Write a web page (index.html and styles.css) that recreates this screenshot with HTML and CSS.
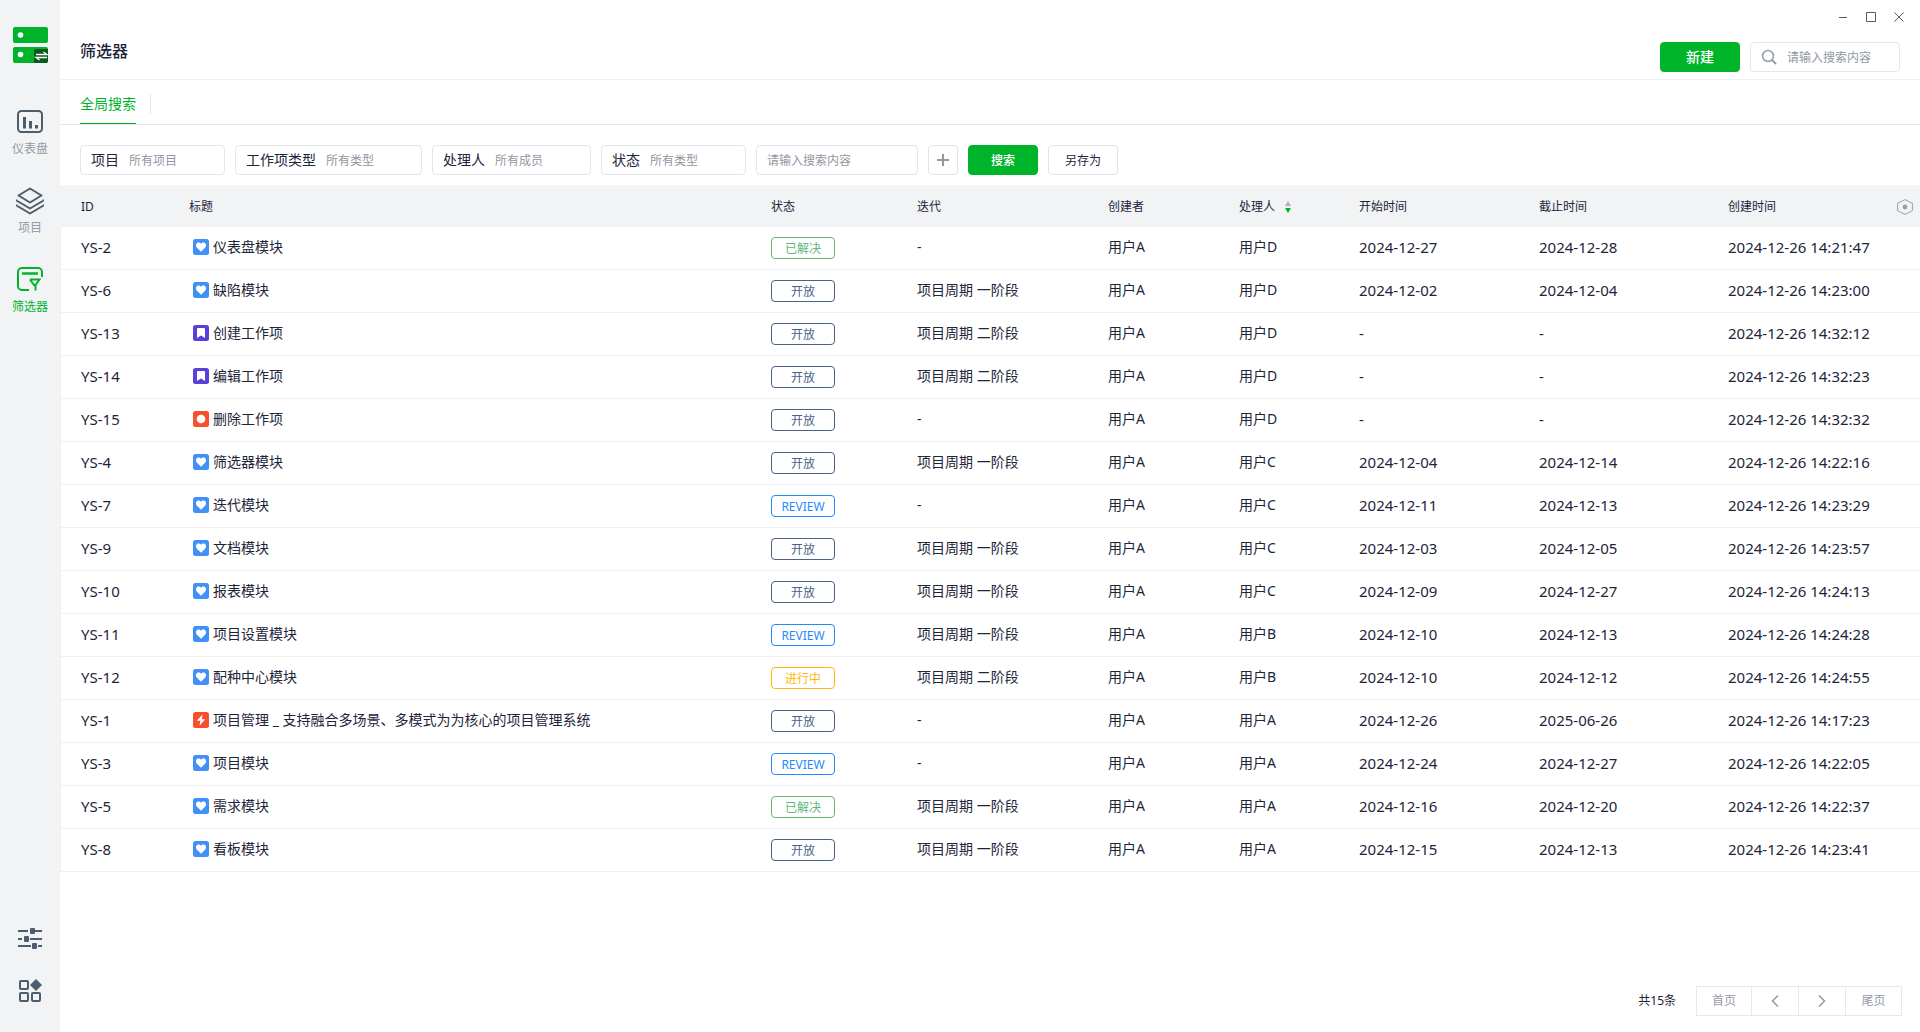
FILE: index.html
```html
<!DOCTYPE html>
<html lang="zh-CN">
<head>
<meta charset="utf-8">
<title>筛选器</title>
<link rel="stylesheet" href="styles.css">
</head>
<body>
<svg class="defs" aria-hidden="true">
  <symbol id="heart" viewBox="0 0 16 16"><rect width="16" height="16" rx="2.5" fill="#4190f7"/><path d="M8 12.8 3.700 8.500C2.500 7.100 2.700 5.100 4 4.100 5.400 3.200 7.100 3.600 8 4.800c.9-1.200 2.600-1.600 4-.7 1.300 1 1.500 3 .3 4.400z" fill="#fff"/></symbol>
  <symbol id="mark" viewBox="0 0 16 16"><rect width="16" height="16" rx="2.5" fill="#5a3fd8"/><path d="M5 3h6a1 1 0 0 1 1 1v9l-4-2.500L4 13V4a1 1 0 0 1 1-1z" fill="#fff"/></symbol>
  <symbol id="dot" viewBox="0 0 16 16"><rect width="16" height="16" rx="2.5" fill="#f9502c"/><circle cx="8" cy="8" r="4.300" fill="#fff"/></symbol>
  <symbol id="bolt" viewBox="0 0 16 16"><rect width="16" height="16" rx="2.5" fill="#f9502c"/><path d="M9.500 2.500 3.800 8.800h3.500L6.600 13.500l5.700-6.300H8.800z" fill="#fff"/></symbol>
</svg>
<div class="app">
  <nav class="sidebar" aria-label="主导航">
    <svg class="logo" viewBox="0 0 36 36"><rect x="1" width="35" height="16" rx="2" fill="#00b42a"/><rect x="1" y="20" width="35" height="16" rx="2" fill="#00b42a"/><circle cx="8.500" cy="8" r="2.800" fill="#fff"/><circle cx="8.500" cy="27.500" r="2.800" fill="#fff"/><path d="M24 22h12v12a2 2 0 0 1-2 2H22V24a2 2 0 0 1 2-2z" fill="#0b5a1c"/><path d="M24 27.500h11L31.500 25M35 30.500H24l3.500 2.500" fill="none" stroke="#fff" stroke-width="1.300"/></svg>
    <a class="nav-item" href="#dashboard">
      <svg viewBox="0 0 28 28" fill="none" stroke="currentColor" stroke-width="2"><rect x="2" y="3" width="24" height="21" rx="3.500"/><path d="M8.500 9v11.500M14.500 13v7.500M20.500 17v3.500" stroke-width="3"/></svg>
      <span>仪表盘</span></a>
    <a class="nav-item" href="#project">
      <svg viewBox="0 0 28 28" fill="none" stroke="currentColor" stroke-width="2" stroke-linejoin="round"><path d="M14 1.500 25.500 8.500 14 15.500 2.500 8.500zM.5 12.500v1L14 21.500l13.500-8v-1M.5 17.500v1L14 26.500l13.500-8v-1"/></svg>
      <span>项目</span></a>
    <a class="nav-item active" href="#filter">
      <svg viewBox="0 0 28 28" fill="none" stroke="currentColor" stroke-width="2"><path d="M26 11V6a4 4 0 0 0-4-4H6a4 4 0 0 0-4 4v14a4 4 0 0 0 4 4h7"/><path d="M6 7.500h16" stroke-width="2.500"/><path d="M14 13.500h9.500l-4 5.500v5.500M14 13.500l4 5.500h2"/></svg>
      <span>筛选器</span></a>
    <div class="nav-bottom">
      <button class="icon-btn" aria-label="设置"><svg viewBox="0 0 24 24"><path d="M0 4h10M17 4h7M0 12h4M12 12h12M0 19h13M20 19h4" stroke="#4e5d6c" stroke-width="2"/><g fill="#4e5d6c"><rect x="12" y="1" width="5" height="6" rx="1"/><rect x="6" y="9" width="5" height="6" rx="1"/><rect x="14" y="16" width="5" height="6" rx="1"/></g></svg></button>
      <button class="icon-btn" aria-label="应用"><svg viewBox="0 0 24 24"><g fill="none" stroke="#4e5d6c" stroke-width="2"><rect x="2" y="2" width="8" height="8" rx="1"/><rect x="2" y="14" width="8" height="8" rx="1"/><rect x="14" y="14" width="8" height="8" rx="1"/></g><path d="m18 0 6 6-6 6-6-6z" fill="#4e5d6c"/></svg></button>
    </div>
  </nav>
  <main class="main">
    <header class="header">
      <h1>筛选器</h1>
      <div class="header-right">
        <div class="window-controls">
          <button aria-label="最小化"><svg viewBox="0 0 12 12"><path d="M2 6.500h8"/></svg></button>
          <button aria-label="最大化"><svg viewBox="0 0 12 12"><path d="M1.500 1.500h9v9h-9z"/></svg></button>
          <button aria-label="关闭"><svg viewBox="0 0 12 12"><path d="m1.500 1.500 9 9m0-9-9 9"/></svg></button>
        </div>
        <div class="header-actions">
          <button class="btn primary create">新建</button>
          <label class="field search"><svg viewBox="0 0 16 16" fill="none" stroke="#949ca5" stroke-width="1.500"><circle cx="7" cy="7" r="5.500"/><path d="m11 11 4 4" stroke-width="2"/></svg><input type="text" placeholder="请输入搜索内容" aria-label="搜索"></label>
        </div>
      </div>
    </header>
    <div class="tabs"><a class="tab" href="#all">全局搜索</a></div>
    <form class="filters">
      <label class="field"><span>项目</span><select><option>所有项目</option></select></label>
      <label class="field wide"><span>工作项类型</span><select><option>所有类型</option></select></label>
      <label class="field mid"><span>处理人</span><select><option>所有成员</option></select></label>
      <label class="field"><span>状态</span><select><option>所有类型</option></select></label>
      <label class="field keyword"><input type="text" placeholder="请输入搜索内容" aria-label="关键字"></label>
      <button type="button" class="btn add" aria-label="添加条件"><svg viewBox="0 0 12 12"><path d="M6 0v12M0 6h12" stroke="#8f979f" stroke-width="2"/></svg></button>
      <button type="button" class="btn primary">搜索</button>
      <button type="button" class="btn">另存为</button>
    </form>
    <table class="grid">
      <colgroup><col class="c-id"><col><col class="c-status"><col class="c-iter"><col class="c-creator"><col class="c-handler"><col class="c-start"><col class="c-end"><col class="c-created"></colgroup>
      <thead><tr><th>ID</th><th>标题</th><th>状态</th><th>迭代</th><th>创建者</th><th><div class="sort">处理人<svg viewBox="0 0 6 12"><path d="M3 0 6 5H0z" fill="#b5aeb4"/><path d="M3 12 6 7H0z" fill="#00b42a"/></svg></div></th><th>开始时间</th><th>截止时间</th><th><div class="last">创建时间<button class="icon-btn" aria-label="列设置"><svg viewBox="0 0 16 16"><path d="M8 .6 15.400 4.300v7.400L8 15.400.6 11.700V4.300z" fill="none" stroke="#999fa6"/><circle cx="8" cy="8" r="2.400" fill="#999fa6"/></svg></button></div></th></tr></thead>
      <tbody id="rows"></tbody>
    </table>
    <footer class="pager">
      <span>共15条</span>
      <div class="pages"><button>首页</button><button aria-label="上一页"><svg viewBox="0 0 8 12"><path d="M7 .5 1.500 6 7 11.500"/></svg></button><button aria-label="下一页"><svg viewBox="0 0 8 12"><path d="M1 .5 6.500 6 1 11.500"/></svg></button><button>尾页</button></div>
    </footer>
  </main>
</div>
<script src="rows.js"></script>
</body>
</html>
```
FILE: rows.js
```js
const P1 = '项目周期 一阶段', P2 = '项目周期 二阶段';
const items = [
  [2, 'heart', '仪表盘模块', 'done', '-', 'D', '2024-12-27', '2024-12-28', '14:21:47'],
  [6, 'heart', '缺陷模块', 'open', P1, 'D', '2024-12-02', '2024-12-04', '14:23:00'],
  [13, 'mark', '创建工作项', 'open', P2, 'D', '-', '-', '14:32:12'],
  [14, 'mark', '编辑工作项', 'open', P2, 'D', '-', '-', '14:32:23'],
  [15, 'dot', '删除工作项', 'open', '-', 'D', '-', '-', '14:32:32'],
  [4, 'heart', '筛选器模块', 'open', P1, 'C', '2024-12-04', '2024-12-14', '14:22:16'],
  [7, 'heart', '迭代模块', 'review', '-', 'C', '2024-12-11', '2024-12-13', '14:23:29'],
  [9, 'heart', '文档模块', 'open', P1, 'C', '2024-12-03', '2024-12-05', '14:23:57'],
  [10, 'heart', '报表模块', 'open', P1, 'C', '2024-12-09', '2024-12-27', '14:24:13'],
  [11, 'heart', '项目设置模块', 'review', P1, 'B', '2024-12-10', '2024-12-13', '14:24:28'],
  [12, 'heart', '配种中心模块', 'doing', P2, 'B', '2024-12-10', '2024-12-12', '14:24:55'],
  [1, 'bolt', '项目管理 _ 支持融合多场景、多模式为为核心的项目管理系统', 'open', '-', 'A', '2024-12-26', '2025-06-26', '14:17:23'],
  [3, 'heart', '项目模块', 'review', '-', 'A', '2024-12-24', '2024-12-27', '14:22:05'],
  [5, 'heart', '需求模块', 'done', P1, 'A', '2024-12-16', '2024-12-20', '14:22:37'],
  [8, 'heart', '看板模块', 'open', P1, 'A', '2024-12-15', '2024-12-13', '14:23:41']
];
const labels = { done: '已解决', open: '开放', review: 'REVIEW', doing: '进行中' };
document.getElementById('rows').innerHTML = items.map(([id, icon, title, status, iter, user, start, end, time]) => `
  <tr><td class="num">YS-${id}</td>
  <td><div class="title"><svg><use href="#${icon}"/></svg><span>${title}</span></div></td>
  <td class="status-cell"><span class="status ${status}">${labels[status]}</span></td>
  <td>${iter}</td><td>用户A</td><td>用户${user}</td>
  <td class="num">${start}</td><td class="num">${end}</td><td class="num">2024-12-26 ${time}</td></tr>`).join('');
```
FILE: styles.css
```css
* { box-sizing: border-box; }
body {
  margin: 0;
  color: #1d2539;
  font: 14px/20px "Noto Sans", "Noto Sans CJK SC", sans-serif;
  background: #fff;
}
button, input, select { font: inherit; color: inherit; }
button { padding: 0; border: 0; background: none; cursor: pointer; }
a { color: inherit; text-decoration: none; }
svg { display: block; flex: none; }
.defs { position: absolute; width: 0; height: 0; }
.app { display: flex; min-height: 100vh; }

.sidebar {
  display: flex;
  flex-direction: column;
  align-items: center;
  width: 60px;
  flex: none;
  padding: 27px 0 29px;
  background: #f1f3f5;
}
.logo { width: 36px; height: 36px; margin-bottom: 45px; }
.nav-item {
  display: flex;
  flex-direction: column;
  align-items: center;
  gap: 3px;
  height: 79px;
  font-size: 12px;
  color: #949ba6;
}
.nav-item svg { width: 28px; height: 28px; color: #4e5d6c; }
.nav-item.active, .nav-item.active svg { color: #00b42a; }
.nav-bottom { display: flex; flex-direction: column; gap: 28px; margin-top: auto; }
.nav-bottom svg { width: 24px; height: 24px; }

.main { flex: 1; min-width: 0; display: flex; flex-direction: column; }
.header {
  display: flex;
  justify-content: space-between;
  align-items: center;
  height: 80px;
  padding: 0 20px;
  border-bottom: 1px solid #f1f1f1;
}
h1 { margin: 22px 0 0; font-size: 16px; line-height: 24px; font-weight: 500; }
.header-right { display: flex; flex-direction: column; align-items: flex-end; gap: 19px; padding-top: 3px; }
.window-controls { display: flex; gap: 16px; margin-right: -5px; }
.window-controls svg { width: 12px; height: 12px; fill: none; stroke: #4e5d6c; }
.header-actions { display: flex; gap: 10px; }

.btn {
  width: 70px;
  height: 30px;
  padding-top: 1px;
  border: 1px solid #dfe3e4;
  border-radius: 4px;
  font-size: 12px;
}
.btn.primary { border-color: #00b42a; background: #00b42a; color: #fff; font-weight: 500; }
.btn.create { width: 80px; font-size: 14px; }
.btn.add { display: grid; place-items: center; width: 30px; padding-top: 0; }
.btn.add svg { width: 12px; height: 12px; }
.field {
  display: flex;
  align-items: center;
  gap: 10px;
  width: 145px;
  height: 30px;
  padding: 0 10px;
  border: 1px solid #e6e6e8;
  border-radius: 4px;
}
.field.wide { width: 187px; }
.field.mid { width: 159px; }
.field.keyword { width: 162px; }
.field.search { width: 150px; padding-right: 0; }
.field svg { width: 16px; height: 16px; }
.field span { flex: none; }
.field input, .field select {
  flex: 1;
  min-width: 0;
  width: 100%;
  padding: 2px 0 0;
  border: 0;
  outline: 0;
  appearance: none;
  background: none;
  font-size: 12px;
  color: #8f97a3;
}
.field input::placeholder { color: #8f97a3; opacity: 1; }

.tabs { display: flex; align-items: center; height: 45px; padding: 0 20px; border-bottom: 1px solid #e6e6e8; }
.tab { height: 44px; line-height: 48px; border-bottom: 1px solid #00b42a; color: #00b42a; }
.tabs::after { content: ""; width: 1px; height: 20px; margin: 4px 0 0 14px; background: #e6e6e8; }
.filters { display: flex; flex-wrap: wrap; gap: 10px; padding: 20px 20px 10px; }

.grid { width: 100%; table-layout: fixed; border-collapse: separate; border-spacing: 0; }
.c-id { width: 109px; }
.c-status { width: 146px; }
.c-iter { width: 191px; }
.c-creator { width: 131px; }
.c-handler { width: 120px; }
.c-start { width: 180px; }
.c-end { width: 189px; }
.c-created { width: 212px; }
th, td { padding: 0 0 0 20px; text-align: left; white-space: nowrap; }
th:first-child { padding-left: 21px; }
th { height: 42px; padding-top: 1px; background: #f1f3f5; font-size: 12px; font-weight: 400; }
td { height: 43px; padding-bottom: 3px; border-bottom: 1px solid #f1f1f3; }
td:first-child { border-left: 1px solid #f1f1f3; }
.num { font-size: 15px; }
.sort, .last, .title { display: flex; align-items: center; }
.sort { gap: 10px; }
.sort svg { width: 6px; height: 12px; }
.last { justify-content: space-between; padding-right: 7px; }
.last svg { width: 16px; height: 16px; }
.title { gap: 4px; padding-left: 4px; }
.title svg { width: 16px; height: 16px; }
.status-cell { padding-bottom: 0; }
.status {
  display: block;
  width: 64px;
  height: 22px;
  border: 1px solid;
  border-radius: 4px;
  font-size: 12px;
  line-height: 22px;
  text-align: center;
}
.done { color: #5eb878; }
.open { color: #4a6285; }
.review { color: #1f8bff; }
.doing { color: #ffb80a; }

.pager {
  display: flex;
  justify-content: flex-end;
  align-items: center;
  gap: 20px;
  margin-top: auto;
  padding: 20px 18px 16px;
  font-size: 12px;
}
.pages { display: flex; border: 1px solid #e8e8ea; color: #949ba6; }
.pages button { display: grid; place-items: center; width: 47px; height: 28px; }
.pages button + button { border-left: 1px solid #e8e8ea; }
.pages button:first-child { width: 54px; }
.pages button:last-child { width: 56px; }
.pages svg { width: 8px; height: 12px; fill: none; stroke: #8f97a3; stroke-width: 1.5; }
```
